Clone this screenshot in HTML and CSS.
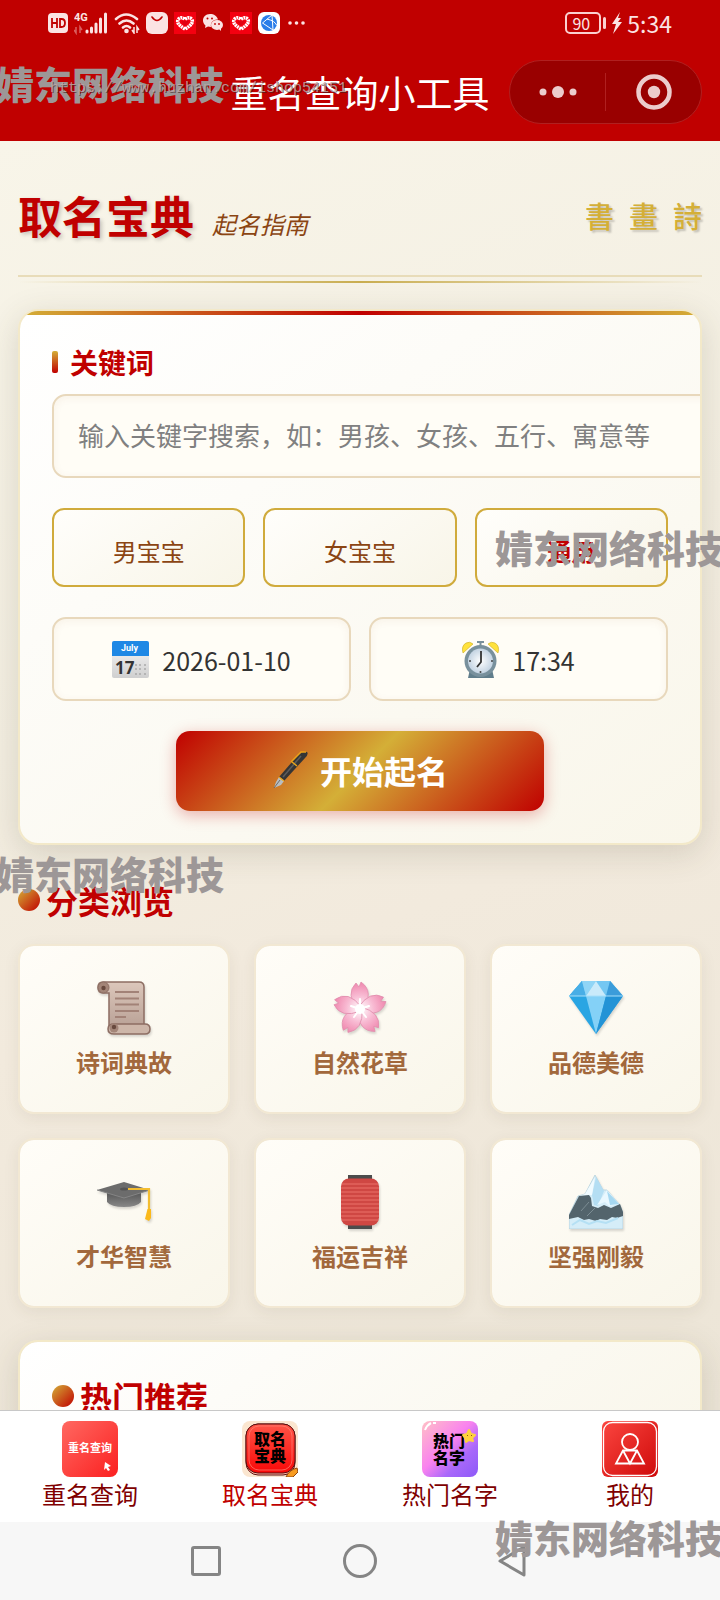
FILE: index.html
```html
<!DOCTYPE html>
<html lang="zh-CN">
  <head>
    <meta charset="UTF-8">
    <meta name="viewport" content="width=device-width, initial-scale=1">
    <title>重名查询小工具</title>
    <link rel="stylesheet" href="styles.css">
  </head>
  <body>
    <header class="topbar">
      <div class="status">
        <div class="status-left">
          <svg width="20" height="22" viewBox="0 0 20 22"><rect y="1" width="20" height="20" rx="4" fill="#fbe3e3"/><path d="M4 6v10M9 6v10M4 11h5M12 6v10M12 7h1.500q3.500 0 3.500 4t-3.500 4H12" fill="none" stroke="#c00000" stroke-width="1.800"/></svg>
          <svg width="34" height="24" viewBox="0 0 34 24"><text x="0" y="10" class="net">4G</text><path d="M2 16v6l-2-3M6 22v-6l2 3" fill="none" stroke="#d96060" stroke-width="1.500"/><path d="M13 20v1M17.500 17v4M22 13v8M26.500 8v13M31.500 3v18" stroke="#fbe3e3" stroke-width="3" stroke-linecap="round"/></svg>
          <svg width="26" height="22" viewBox="0 0 26 22"><g fill="none" stroke="#fbe3e3" stroke-width="2.600" stroke-linecap="round"><path d="M2 7q10-9 21 0M5.500 11.500q7-6 14 0M9 15.500q3.500-3 7 0"/></g><circle cx="12.500" cy="19" r="2.300" fill="#fbe3e3"/><path d="M20 15v6l-2-3M23 21v-6l2 3" fill="none" stroke="#fbe3e3" stroke-width="1.500"/></svg>
          <svg width="22" height="22" viewBox="0 0 22 22"><rect width="22" height="22" rx="6" fill="#fbe3e3"/><path d="M6 5q5 7 10 0" fill="none" stroke="#c00000" stroke-width="1.600" stroke-linecap="round"/></svg>
          <svg width="22" height="22" viewBox="0 0 22 22"><rect width="22" height="22" fill="#f40010"/><path d="M11 17Q2 12 4 7.500Q7 4 11 7.500Q15 4 18 7.500Q20 12 11 17z" fill="none" stroke="#fff" stroke-width="3.500" stroke-dasharray="2 .6"/><path d="M11 14L7.500 10Q9 7.500 11 9.500Q13 7.500 14.500 10z" fill="#e00010"/></svg>
          <svg width="22" height="20" viewBox="0 0 22 20"><path d="M8 1C3.500 1 1 4 1 7.500c0 2 1 3.800 2.500 5L3 15l3-1.500 3 .5c-1-5 3-8 7-7.500C15 3 12 1 8 1z" fill="#fbe3e3"/><ellipse cx="15" cy="12" rx="6" ry="5" fill="#fbe3e3"/><path d="M17 16l2 2v-4z" fill="#fbe3e3"/><circle cx="5.500" cy="5.500" r="1" fill="#c00000"/><circle cx="10" cy="5.500" r="1" fill="#c00000"/><circle cx="13" cy="11" r=".9" fill="#c00000"/><circle cx="17" cy="11" r=".9" fill="#c00000"/></svg>
          <svg width="22" height="22" viewBox="0 0 22 22"><rect width="22" height="22" fill="#f40010"/><path d="M11 17Q2 12 4 7.500Q7 4 11 7.500Q15 4 18 7.500Q20 12 11 17z" fill="none" stroke="#fff" stroke-width="3.500" stroke-dasharray="2 .6"/><path d="M11 14L7.500 10Q9 7.500 11 9.500Q13 7.500 14.500 10z" fill="#e00010"/></svg>
          <svg width="22" height="22" viewBox="0 0 22 22"><rect width="22" height="22" rx="6" fill="#fff"/><circle cx="11" cy="11" r="8" fill="#2b7de9"/><path d="M14 3L4.500 11 15 18zM9 7q8 2 9.500 6" fill="none" stroke="#fff" stroke-width="1"/></svg>
          <svg width="20" height="22" viewBox="0 0 20 22" fill="#fbe3e3"><circle cx="4" cy="11" r="1.800"/><circle cx="10.500" cy="11" r="1.800"/><circle cx="17" cy="11" r="1.800"/></svg>
        </div>
        <div class="status-right">
          <span class="battery">90</span>
          <svg width="10" height="22" viewBox="0 0 10 22"><path d="M8 0L0 12h4L1 22 10 10H6l3-4H6z" fill="#fbe3e3"/></svg>
          <span class="clock">5:34</span>
        </div>
      </div>
      <div class="titlebar">
        <h1 class="title">重名查询小工具</h1>
        <div class="capsule">
          <button class="capsule-btn" aria-label="更多"><svg width="38" height="14" viewBox="0 0 38 14" fill="#eccccc"><circle cx="4" cy="7" r="3.500"/><circle cx="19" cy="7" r="6"/><circle cx="34" cy="7" r="3.500"/></svg></button>
          <button class="capsule-btn" aria-label="关闭"><svg width="36" height="36" viewBox="0 0 36 36"><circle cx="18" cy="18" r="15.500" fill="none" stroke="#eccccc" stroke-width="4.500"/><circle cx="18" cy="18" r="6.200" fill="#eccccc"/></svg></button>
        </div>
      </div>
    </header>

    <main class="content">
      <div class="page-head">
        <h2 class="brand">取名宝典</h2>
        <span class="brand-sub">起名指南</span>
        <div class="seals"><span>書</span><span>畫</span><span>詩</span></div>
      </div>

      <form class="card search-card">
        <label class="field-label" for="keyword">关键词</label>
        <input class="keyword" id="keyword" type="text" placeholder="输入关键字搜索，如：男孩、女孩、五行、寓意等">
        <div class="row">
          <button type="button" class="gender">男宝宝</button>
          <button type="button" class="gender">女宝宝</button>
          <button type="button" class="gender active">通用</button>
        </div>
        <div class="row">
          <button type="button" class="picker">
            <svg width="38" height="38" viewBox="0 0 38 38">
              <defs><linearGradient id="cal" x2="0" y2="1"><stop offset="0" stop-color="#fafafa"/><stop offset="1" stop-color="#cfcfcf"/></linearGradient></defs>
              <rect x="0" y="0" width="37" height="37" rx="2" fill="url(#cal)"/><path d="M0 15V2q0-2 2-2h33q2 0 2 2v13z" fill="#1e88e5"/>
              <text x="9" y="10" class="cal-month">July</text><text x="3" y="33" class="cal-day">17</text>
              <g fill="#aaa"><circle cx="24" cy="24" r="1"/><circle cx="28" cy="24" r="1"/><circle cx="33" cy="24" r="1"/><circle cx="24" cy="28" r="1"/><circle cx="28" cy="28" r="1"/><circle cx="33" cy="28" r="1"/><circle cx="24" cy="33" r="1"/><circle cx="28" cy="33" r="1"/><circle cx="33" cy="33" r="1"/></g>
            </svg>
            <span>2026-01-10</span>
          </button>
          <button type="button" class="picker">
            <svg width="38" height="38" viewBox="0 0 38 38">
              <defs><radialGradient id="face"><stop offset="0" stop-color="#fff"/><stop offset="1" stop-color="#c3d3e2"/></radialGradient></defs>
              <path d="M6 37l2-9h22l2 9z" fill="#607d8b"/><path d="M15 1h7M18.500 1v5" stroke="#78909c" stroke-width="2"/>
              <path d="M1 12Q-1 5 4 2q4-2 7 1z" fill="#ffe23c" stroke="#c9aa20" stroke-width=".6"/><path d="M36 12q2-7-3-10-4-2-7 1z" fill="#ffe23c" stroke="#c9aa20" stroke-width=".6"/>
              <circle cx="18.500" cy="20" r="16" fill="#78909c"/><circle cx="18.500" cy="20" r="12.500" fill="url(#face)"/>
              <path d="M19 10v11l-4 5" fill="none" stroke="#333" stroke-width="1.800"/><g fill="#444"><circle cx="8" cy="20" r="1"/><circle cx="30" cy="20" r="1"/><circle cx="18.500" cy="31" r="1"/></g>
            </svg>
            <span>17:34</span>
          </button>
        </div>
        <button type="button" class="submit">
          <svg width="38" height="38" viewBox="0 0 38 38">
            <path d="M7 26L26 4q4-4 9-3 2 2-2 6L12 30z" fill="#353535"/><path d="M11 26L29 5" stroke="#5c5c5c" stroke-width="1.500"/><path d="M7 26l5 4-3 4-7 3 2-6z" fill="#b9bec1"/><path d="M2 37l6-8" stroke="#555" stroke-width=".8"/><path d="M7 26l5 4M20 11l5 4" stroke="#e9a51a" stroke-width="1.500"/><path d="M19 11L29 1l5 0" fill="none" stroke="#eba119" stroke-width="1.500"/>
          </svg>
          <span>开始起名</span>
        </button>
      </form>

      <h3 class="section-title">分类浏览</h3>
      <div class="grid">
        <button class="cat">
          <svg width="54" height="54" viewBox="0 0 54 54">
            <defs><linearGradient id="paper" x2="0" y2="1"><stop offset="0" stop-color="#dcc7bb"/><stop offset="1" stop-color="#b79f94"/></linearGradient></defs>
            <path d="M6 1h36q5 0 5 5v43H12V12H6Q1 12 1 6.500T6 1z" fill="url(#paper)" stroke="#8d6e63" stroke-width="1.500"/>
            <circle cx="6.500" cy="6.500" r="5.500" fill="#a38578" stroke="#8d6e63"/><circle cx="6.500" cy="7" r="2.200" fill="#68493e"/>
            <path d="M17 43h31q5 0 5 5t-5 5H17q-6 0-6-5t6-5z" fill="#cdb6a9" stroke="#8d6e63" stroke-width="1.500"/><circle cx="17" cy="47" r="4.500" fill="#a38578"/><circle cx="17" cy="46" r="2.200" fill="#68493e"/>
            <path d="M18 11h24M18 17.500h24M18 23.500h24M18 30h24M18 36h11" stroke="#a28277" stroke-width="2"/>
          </svg>
          <span>诗词典故</span>
        </button>
        <button class="cat">
          <svg width="54" height="54" viewBox="0 0 54 54">
            <defs><radialGradient id="petal" gradientUnits="userSpaceOnUse" cx="27" cy="28" r="27"><stop offset="0" stop-color="#fff"/><stop offset=".5" stop-color="#f8bbd3"/><stop offset="1" stop-color="#ef86ad"/></radialGradient></defs>
            <g fill="url(#petal)" stroke="#e18fae" stroke-width=".8">
              <path d="M25 29Q12 13 23 2l3 4 2-5q14 10 1 28z"/>
              <path d="M25 29Q12 13 23 2l3 4 2-5q14 10 1 28z" transform="rotate(72 27 28)"/>
              <path d="M25 29Q12 13 23 2l3 4 2-5q14 10 1 28z" transform="rotate(144 27 28)"/>
              <path d="M25 29Q12 13 23 2l3 4 2-5q14 10 1 28z" transform="rotate(216 27 28)"/>
              <path d="M25 29Q12 13 23 2l3 4 2-5q14 10 1 28z" transform="rotate(288 27 28)"/>
            </g>
            <circle cx="27" cy="28" r="5" fill="#fff"/><path d="M27 28V18M27 28l9-3M27 28l6 8M27 28l-6 8M27 28l-9-3" stroke="#fff" stroke-width="2" stroke-linecap="round"/>
          </svg>
          <span>自然花草</span>
        </button>
        <button class="cat">
          <svg width="54" height="54" viewBox="0 0 54 54">
            <path d="M13 0h28l13 15-27 38L0 15z" fill="#29a5e3"/><path d="M13 0h28l13 15H0z" fill="#64c2f0"/><path d="M0 15L13 0l4 15z" fill="#48aee6"/><path d="M13 0h14L17 15z" fill="#90d5f6"/><path d="M27 0h14l-4 15z" fill="#74c7f2"/><path d="M41 0l13 15H37z" fill="#3b9cda"/><path d="M27 0l10 15H17z" fill="#c9eafa"/><path d="M17 15h20L27 53z" fill="#84d1f7"/><path d="M37 15h17L27 53z" fill="#2393d6"/><path d="M0 15h54" stroke="#a8e0fa"/>
          </svg>
          <span>品德美德</span>
        </button>
        <button class="cat">
          <svg width="54" height="54" viewBox="0 0 54 54">
            <defs><linearGradient id="hat" x2="0" y2="1"><stop offset="0" stop-color="#555"/><stop offset="1" stop-color="#888"/></linearGradient></defs>
            <path d="M10 17h34v10q-4 5-17 5t-17-5z" fill="url(#hat)"/><path d="M0 15l27-8 26 8-26 8z" fill="#6c6c6c"/><path d="M0 15l27 8 26-8" fill="none" stroke="#858585"/><ellipse cx="27" cy="14" rx="4" ry="1.600" fill="#555"/><path d="M31 14h21v22" fill="none" stroke="#f3bd31" stroke-width="2.200"/><path d="M50.500 34h3.500v9l-2 3-4-2z" fill="#fbb91b"/>
          </svg>
          <span>才华智慧</span>
        </button>
        <button class="cat">
          <svg width="54" height="54" viewBox="0 0 54 54">
            <path d="M15 0h24v5H15zM15 49h24v5H15z" fill="#4c4c4c"/><rect x="8" y="3.500" width="38" height="47" rx="8" fill="#cf4743"/><path d="M9 9h36M8 13h38M8 17h38M8 21h38M8 25h38M8 29h38M8 33h38M8 37h38M8 41h38M9 45h36" stroke="#e2645d" stroke-width="1.400"/>
          </svg>
          <span>福运吉祥</span>
        </button>
        <button class="cat">
          <svg width="54" height="54" viewBox="0 0 54 54">
            <path d="M0 54V40L9 21 16 19 26 0l8 15 4 0 13 15 3 8v16z" fill="#d5edf8" stroke="#b4cfdb" stroke-width=".8"/><path d="M27 2l8 14-6 15-4-1-2-10z" fill="#b4def3"/><path d="M26 2l-3 18-13 1 6-2z" fill="#f1fbff"/><path d="M10 21l10-1 2 3 1 8 6 2 6-3 7 3 9-4 3 8v4l-6 2-5-1-5 3-7-1-4 2-7-2-5 1-6-3-9 2v-4z" fill="#53646c"/><path d="M12 36l8-9M18 41l8-8" stroke="#7c8d94" stroke-width="1"/><path d="M38 15L28 30l8-3 4 4 10-2z" fill="#e9f8ff"/><path d="M38 16l3 14 9-1z" fill="#a6d8f1"/><path d="M3 50l8-5 9 4 8-3 9 2 12-5" fill="none" stroke="#b5e0f4" stroke-width="2"/>
          </svg>
          <span>坚强刚毅</span>
        </button>
      </div>

      <section class="card">
        <h3 class="section-title">热门推荐</h3>
      </section>
    </main>

    <nav class="tabs">
      <a class="tab" href="#query">
        <svg width="56" height="56" viewBox="0 0 56 56">
          <defs><linearGradient id="t1" x2="1" y2="1"><stop offset="0" stop-color="#ff6861"/><stop offset="1" stop-color="#fb2020"/></linearGradient></defs>
          <rect width="56" height="56" rx="8" fill="url(#t1)"/><text x="28" y="31" class="ico-small">重名查询</text><path d="M43 41l6 4-3 1 2 3-2 1-2-3-2 2z" fill="#fff"/>
        </svg>
        <span>重名查询</span>
      </a>
      <a class="tab active" href="#names">
        <svg width="56" height="56" viewBox="0 0 56 56">
          <defs><linearGradient id="t2" x2="0" y2="1"><stop offset="0" stop-color="#ff5547"/><stop offset="1" stop-color="#f90808"/></linearGradient></defs>
          <rect width="56" height="56" rx="8" fill="#fbe6d0"/><rect x="4" y="3" width="49" height="51" rx="12" fill="#ffb7a4" stroke="#5b1010"/><rect x="4" y="3" width="49" height="49" rx="12" fill="url(#t2)" stroke="#5b1010"/><rect x="7" y="5" width="43" height="44" rx="10" fill="none" stroke="#ff8376" stroke-width=".7"/>
          <text x="28" y="24" class="ico-big">取名</text><text x="28" y="41" class="ico-big">宝典</text><path d="M44 56q3-7 11-9l1 4-5 5z" fill="#f79b20" stroke="#8e4710"/>
        </svg>
        <span>取名宝典</span>
      </a>
      <a class="tab" href="#hot">
        <svg width="56" height="56" viewBox="0 0 56 56">
          <defs><linearGradient id="t3" x2="1" y2="1"><stop offset="0" stop-color="#ffc0c5"/><stop offset=".45" stop-color="#f982ef"/><stop offset=".7" stop-color="#a968fa"/><stop offset="1" stop-color="#8c59f8"/></linearGradient></defs>
          <rect width="56" height="56" rx="8" fill="url(#t3)"/><path d="M3 9q2-5 6-7M11 2h3" stroke="#fff" stroke-width="2" fill="none"/>
          <text x="27" y="26" class="ico-big">热门</text><text x="27" y="43" class="ico-big">名字</text>
          <path d="M47 9l2 4 4 1-3 3 1 3-4-1-3 2-1-4-2-3 4-1z" fill="#ffd23d" stroke="#ffd23d" stroke-width="2" stroke-linejoin="round"/><path d="M45 14l1 1M49 14l1 1" stroke="#8c5a10"/>
        </svg>
        <span>热门名字</span>
      </a>
      <a class="tab" href="#me">
        <svg width="56" height="56" viewBox="0 0 56 56">
          <defs><linearGradient id="t4" x2="1" y2="1"><stop offset="0" stop-color="#fb4640"/><stop offset="1" stop-color="#ce0909"/></linearGradient></defs>
          <rect width="56" height="56" rx="6" fill="url(#t4)"/><rect x="1.500" y="1.500" width="53" height="53" rx="9" fill="none" stroke="#fff" stroke-width="1.300"/>
          <g fill="none" stroke="#fff" stroke-width="1.800"><circle cx="28" cy="21" r="8"/><path d="M21 29.500h14l7 13H14zM21 29.500l7 13 7-13"/></g>
        </svg>
        <span>我的</span>
      </a>
    </nav>

    <div class="sysnav">
      <button class="sys" aria-label="最近任务"><svg width="32" height="32" viewBox="0 0 32 32"><rect x="2.500" y="2.500" width="27" height="27" rx="1.500"/></svg></button>
      <button class="sys" aria-label="主页"><svg width="34" height="34" viewBox="0 0 34 34"><circle cx="17" cy="17" r="15.500"/></svg></button>
      <button class="sys" aria-label="返回"><svg width="32" height="32" viewBox="0 0 32 32"><path d="M2 16L26 2v28z" stroke-linejoin="round"/></svg></button>
    </div>

    <div class="overlay">
      <span class="mark mark-1">婧东网络科技</span>
      <span class="mark mark-2">婧东网络科技</span>
      <span class="mark mark-3">婧东网络科技</span>
      <span class="mark mark-4">婧东网络科技</span>
      <span class="site">https://www.huzhan.com/ishop54151</span>
    </div>
  </body>
</html>
```

FILE: styles.css
```css
* {
  box-sizing: border-box;
}

body {
  margin: 0;
  height: 100vh;
  display: flex;
  flex-direction: column;
  position: relative;
  font-family: "Noto Sans CJK SC", sans-serif;
  color: #333;
  background: #f4efe3;
}

h1, h2, h3 {
  margin: 0;
}

button {
  font-family: inherit;
  margin: 0;
  padding: 0;
  border: none;
  background: none;
  cursor: pointer;
}

svg {
  display: block;
  flex: none;
}

/* top bar */
.topbar {
  flex: none;
  background: #c00000;
  color: #fff;
}

.status {
  height: 45px;
  padding: 0 48px;
  display: flex;
  align-items: center;
  justify-content: space-between;
}

.status-left {
  display: flex;
  align-items: center;
  gap: 6px;
}

.status-right {
  display: flex;
  align-items: center;
  gap: 5px;
  color: #fbe3e3;
}

.net {
  font: bold 11px Roboto, sans-serif;
  fill: #fbe3e3;
}

.battery {
  position: relative;
  width: 36px;
  height: 22px;
  margin-right: 6px;
  padding-right: 4px;
  border: 2px solid #fbd0d0;
  border-radius: 5px;
  font-size: 16px;
  line-height: 18px;
  text-align: center;
}

.battery::after {
  content: "";
  position: absolute;
  right: -7px;
  top: 3px;
  width: 3px;
  height: 12px;
  border-radius: 2px;
  background: #fbd0d0;
}

.clock {
  font-size: 23px;
  line-height: 32px;
}

.titlebar {
  height: 96px;
  padding-bottom: 2px;
  display: grid;
  grid-template-columns: 1fr auto 1fr;
  align-items: center;
}

.title {
  grid-column: 2;
  font-size: 37px;
  font-weight: 400;
  line-height: 48px;
}

.capsule {
  justify-self: end;
  display: flex;
  width: 193px;
  height: 64px;
  margin-right: 18px;
  padding: 12px 0;
  border: 1px solid #b02020;
  border-radius: 32px;
  background: #990000;
}

.capsule-btn {
  flex: 1;
  display: flex;
  align-items: center;
  justify-content: center;
}

.capsule-btn + .capsule-btn {
  border-left: 1px solid #b02020;
}

/* page */
.content {
  flex: 1;
  min-height: 0;
  overflow: auto;
  scrollbar-width: none;
  padding: 0 18px;
  background: linear-gradient(160deg, #f8f5e9 0%, #f3eee1 40%, #f2eadd 60%, #ece5d7 100%);
}

.page-head {
  position: relative;
  display: flex;
  align-items: baseline;
  padding: 42px 0 28px;
  border-bottom: 2px solid #e8dcb9;
}

.page-head::after {
  content: "";
  position: absolute;
  left: 0;
  right: 0;
  bottom: -8px;
  height: 2px;
  background: linear-gradient(90deg, transparent, #c9ad50, transparent);
}

.brand {
  font-size: 44px;
  line-height: 64px;
  color: #c00000;
  text-shadow: 2px 2px 4px rgba(0, 0, 0, 0.2);
}

.brand-sub {
  margin-left: 18px;
  font-size: 24px;
  font-style: italic;
  color: #8b4513;
}

.seals {
  margin-left: auto;
  align-self: center;
  display: flex;
  gap: 15px;
  font-family: "Noto Sans CJK TC", sans-serif;
  font-size: 29px;
  font-weight: 500;
  line-height: 40px;
  color: #d4af37;
  text-shadow: 2px 2px 2px rgba(0, 0, 0, 0.2);
}

.card {
  position: relative;
  overflow: hidden;
  margin-top: 32px;
  padding: 32px;
  border: 2px solid #f3e9c9;
  border-radius: 20px;
  background: linear-gradient(145deg, #fff, #f9f6ea);
  background-clip: padding-box;
  box-shadow: 0 8px 32px rgba(70, 65, 40, 0.17);
}

.search-card::before {
  content: "";
  position: absolute;
  top: 0;
  left: 0;
  right: 0;
  height: 4px;
  background: linear-gradient(90deg, #d4af37, #c00000, #d4af37);
}

.field-label {
  display: flex;
  align-items: center;
  gap: 12px;
  margin-bottom: 13px;
  font-size: 28px;
  font-weight: bold;
  line-height: 38px;
  color: #c00000;
}

.field-label::before {
  content: "";
  width: 6px;
  height: 22px;
  border-radius: 2px;
  background: linear-gradient(#d4af37, #c00000);
}

/* wider than the card, the right end is cut off */
.keyword {
  display: block;
  width: calc(100% + 56px);
  height: 84px;
  padding: 0 24px 4px;
  border: 2px solid #e8d8bc;
  border-radius: 14px;
  background: #fffdf6;
  box-shadow: inset 0 2px 8px rgba(139, 69, 19, 0.06);
  font-family: inherit;
  font-size: 26px;
}

.keyword::placeholder {
  color: #808080;
}

.row {
  display: flex;
  gap: 18px;
  margin-top: 30px;
}

.gender {
  flex: 1;
  height: 79px;
  padding-top: 6px;
  border: 2px solid #d0ab3c;
  border-radius: 12px;
  background: linear-gradient(145deg, #fffefb, #f8f5e8);
  font-size: 24px;
  color: #8b4513;
}

.gender.active {
  color: #c00000;
  font-weight: bold;
}

.picker {
  flex: 1;
  height: 84px;
  display: flex;
  align-items: center;
  justify-content: center;
  gap: 12px;
  padding-top: 2px;
  border: 2px solid #e8d8bc;
  border-radius: 14px;
  background: #fffdf6;
  box-shadow: inset 0 2px 8px rgba(139, 69, 19, 0.06);
  font-size: 25px;
  line-height: 34px;
  color: #333;
}

.cal-month {
  font: bold 9px Roboto, sans-serif;
  fill: #fff;
}

.cal-day {
  font: bold 17px "Open Sans", sans-serif;
  fill: #333;
}

.submit {
  width: 368px;
  max-width: 100%;
  height: 80px;
  margin: 30px auto 0;
  padding-bottom: 2px;
  display: flex;
  align-items: center;
  justify-content: center;
  gap: 10px;
  border-radius: 14px;
  background: linear-gradient(135deg, #c00000, #d4af37 50%, #c00000);
  box-shadow: 0 4px 16px rgba(192, 0, 0, 0.3);
  color: #fff;
  font-size: 32px;
  font-weight: bold;
}

.section-title {
  display: flex;
  align-items: center;
  gap: 6px;
  font-size: 32px;
  line-height: 44px;
  color: #c00000;
}

.section-title::before {
  content: "";
  width: 22px;
  height: 22px;
  border-radius: 50%;
  background: linear-gradient(135deg, #d4af37, #c00000);
}

.content > .section-title {
  margin: 33px 0 22px;
}

.grid {
  display: grid;
  grid-template-columns: repeat(3, 1fr);
  gap: 24px;
}

.cat {
  display: flex;
  flex-direction: column;
  align-items: center;
  gap: 9px;
  padding: 35px 0 32px;
  border: 2px solid #f2e8d3;
  border-radius: 16px;
  background: linear-gradient(145deg, #fffdf8, #f9f6ea);
  background-clip: padding-box;
  box-shadow: 0 4px 16px rgba(80, 70, 40, 0.08);
  font-size: 24px;
  font-weight: bold;
  line-height: 36px;
  color: #a2683c;
}

.cat svg {
  filter: drop-shadow(1px 2px 1px rgba(0, 0, 0, 0.15));
}

/* tab bar */
.tabs {
  flex: none;
  position: relative;
  display: flex;
  padding: 10px 0 11px;
  border-top: 1px solid #c8c8c8;
  background: #fff;
}

.tab {
  flex: 1;
  display: flex;
  flex-direction: column;
  align-items: center;
  font-size: 24px;
  line-height: 34px;
  color: #800000;
  text-decoration: none;
}

.tab.active {
  color: #c00000;
}

.ico-small {
  font-size: 11px;
  font-weight: bold;
  text-anchor: middle;
  fill: #fff;
}

.ico-big {
  font-size: 16px;
  font-weight: 900;
  text-anchor: middle;
  fill: #000;
}

.sysnav {
  flex: none;
  height: 78px;
  display: flex;
  justify-content: center;
  background: #f7f7f7;
}

.sys {
  width: 154px;
  display: flex;
  align-items: center;
  justify-content: center;
}

.sys svg {
  fill: none;
  stroke: #858585;
  stroke-width: 3;
}

/* watermarks */
.overlay {
  position: absolute;
  inset: 0;
  overflow: hidden;
  pointer-events: none;
}

.mark {
  position: absolute;
  font-size: 38px;
  font-weight: 900;
  line-height: 44px;
  white-space: nowrap;
  color: #9d9797;
}

.mark-1 {
  left: -4px;
  top: 61px;
}

.mark-2 {
  left: 495px;
  top: 525px;
}

.mark-3 {
  left: -4px;
  top: 851px;
}

.mark-4 {
  left: 495px;
  top: 1515px;
}

.site {
  position: absolute;
  left: 50px;
  top: 79px;
  font-family: "Liberation Mono", monospace;
  font-size: 15px;
  line-height: 20px;
  color: rgba(190, 170, 170, 0.85);
  text-shadow: 1px 1px 0 rgba(60, 30, 30, 0.6);
}
```
